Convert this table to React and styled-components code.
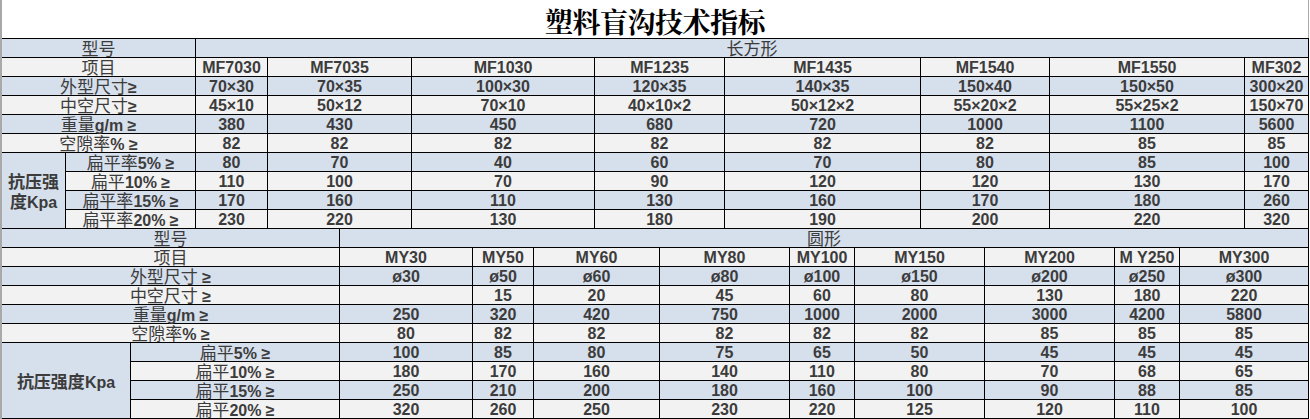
import React from "react";
import styled, { createGlobalStyle } from "styled-components";

const Global = createGlobalStyle`
  html, body { margin: 0; padding: 0; background: #ffffff; }
  body { font-family: "Liberation Sans", "Noto Sans CJK SC", sans-serif; }
`;

const Page = styled.div`
  width: 1307px;
  border-left: 2px solid #a9a9a9;
  display: flex;
  flex-direction: column;
`;

const Title = styled.h1`
  margin: 0;
  height: 38px;
  box-sizing: border-box;
  padding-top: 3px;
  border-right: 1px solid #a9a9a9;
  display: flex;
  align-items: center;
  justify-content: center;
  font-family: "Noto Serif CJK SC", "Noto Sans CJK SC", serif;
  font-weight: 700;
  font-size: 28px;
  letter-spacing: -0.5px;
  color: #000;
`;

const Grid = styled.div`
  display: grid;
  grid-template-columns: ${(p) => p.$cols};
  grid-auto-rows: 18px;
  gap: 1px;
  background: #000;
  padding: 1px 1px ${(p) => (p.$last ? "1px" : "0")} 0;
`;

const Cell = styled.div`
  grid-column: span ${(p) => p.$span || 1};
  grid-row: span ${(p) => p.$rows || 1};
  background: ${(p) => (p.$tone === "blue" ? "#d6dfec" : "#f2f2f2")};
  display: flex;
  align-items: center;
  justify-content: center;
  padding-top: 2px;
  box-sizing: border-box;
  min-width: 0;
`;

const Inner = styled.span`
  display: block;
  text-align: center;
  font-family: "Liberation Sans", "Noto Sans CJK SC", sans-serif;
  font-weight: 700;
  font-size: 16px;
  line-height: ${(p) => (p.$multi ? "19px" : "18px")};
  color: #3c3c3c;
  white-space: ${(p) => (p.$multi ? "normal" : "nowrap")};
`;

const Han = styled.span`
  font-family: "Noto Sans CJK SC", sans-serif;
  font-size: 17px;
  line-height: 1;
  font-weight: ${(p) => (p.$bold ? 700 : 400)};
`;

const CJK = /([\u3000-\u9fff\uff00-\uffef]+)/;

function Text({ value, bold }) {
  return value.split(CJK).map((part, i) =>
    i % 2 === 1 ? (
      <Han key={i} $bold={bold}>
        {part}
      </Han>
    ) : (
      <React.Fragment key={i}>{part}</React.Fragment>
    )
  );
}

function C({ children, tone, span, rows, label, bold }) {
  return (
    <Cell $tone={tone} $span={span} $rows={rows}>
      <Inner $multi={rows > 1}>
        {label ? <Text value={children} bold={bold} /> : children}
      </Inner>
    </Cell>
  );
}

const tone = (r) => (r % 2 === 0 ? "blue" : "gray");

const rect = {
  cols: "63px 129px 71px 143px 182px 129px 195px 128px 194px 63px",
  header: "长方形",
  models: ["MF7030", "MF7035", "MF1030", "MF1235", "MF1435", "MF1540", "MF1550", "MF302"],
  rows: [
    ["外型尺寸≥", ["70×30", "70×35", "100×30", "120×35", "140×35", "150×40", "150×50", "300×20"]],
    ["中空尺寸≥", ["45×10", "50×12", "70×10", "40×10×2", "50×12×2", "55×20×2", "55×25×2", "150×70"]],
    ["重量g/m ≥", ["380", "430", "450", "680", "720", "1000", "1100", "5600"]],
    ["空隙率% ≥", ["82", "82", "82", "82", "82", "82", "85", "85"]],
  ],
  press: [
    ["扁平率5% ≥", ["80", "70", "40", "60", "70", "80", "85", "100"]],
    ["扁平10% ≥", ["110", "100", "70", "90", "120", "120", "130", "170"]],
    ["扁平率15% ≥", ["170", "160", "110", "130", "160", "170", "180", "260"]],
    ["扁平率20% ≥", ["230", "220", "130", "180", "190", "200", "220", "320"]],
  ],
};

const round = {
  cols: "128px 208px 132px 60px 125px 129px 64px 129px 129px 64px 128px",
  header: "圆形",
  models: ["MY30", "MY50", "MY60", "MY80", "MY100", "MY150", "MY200", "M Y250", "MY300"],
  rows: [
    ["外型尺寸 ≥", ["ø30", "ø50", "ø60", "ø80", "ø100", "ø150", "ø200", "ø250", "ø300"]],
    ["中空尺寸 ≥", ["", "15", "20", "45", "60", "80", "130", "180", "220"]],
    ["重量g/m ≥", ["250", "320", "420", "750", "1000", "2000", "3000", "4200", "5800"]],
    ["空隙率% ≥", ["80", "82", "82", "82", "82", "82", "85", "85", "85"]],
  ],
  press: [
    ["扁平5% ≥", ["100", "85", "80", "75", "65", "50", "45", "45", "45"]],
    ["扁平10% ≥", ["180", "170", "160", "140", "110", "80", "70", "68", "65"]],
    ["扁平15% ≥", ["250", "210", "200", "180", "160", "100", "90", "88", "85"]],
    ["扁平20% ≥", ["320", "260", "250", "230", "220", "125", "120", "110", "100"]],
  ],
};

function SpecTable({ data, last }) {
  const n = data.models.length;
  const out = [];
  out.push(
    <C key="h0" span={2} tone="blue" label>型号</C>,
    <C key="h1" span={n} tone="blue" label>{data.header}</C>,
    <C key="m0" span={2} tone="gray" label>项目</C>
  );
  data.models.forEach((m, i) =>
    out.push(
      <C key={"m" + (i + 1)} tone="gray">
        {m}
      </C>
    )
  );
  data.rows.forEach(([label, vals], r) => {
    const t = tone(r + 2);
    out.push(
      <C key={"r" + r} span={2} tone={t} label>
        {label}
      </C>
    );
    vals.forEach((v, i) =>
      out.push(
        <C key={"r" + r + "-" + i} tone={t}>
          {v}
        </C>
      )
    );
  });
  data.press.forEach(([label, vals], r) => {
    const t = tone(r + 6);
    if (r === 0) {
      out.push(
        <C key="kpa" rows={4} tone="blue" label bold>
          抗压强度Kpa
        </C>
      );
    }
    out.push(
      <C key={"p" + r} tone={t} label>
        {label}
      </C>
    );
    vals.forEach((v, i) =>
      out.push(
        <C key={"p" + r + "-" + i} tone={t}>
          {v}
        </C>
      )
    );
  });
  return (
    <Grid $cols={data.cols} $last={last}>
      {out}
    </Grid>
  );
}

export default function App() {
  return (
    <>
      <Global />
      <Page>
        <Title>塑料盲沟技术指标</Title>
        <SpecTable data={rect} />
        <SpecTable data={round} last />
      </Page>
    </>
  );
}
